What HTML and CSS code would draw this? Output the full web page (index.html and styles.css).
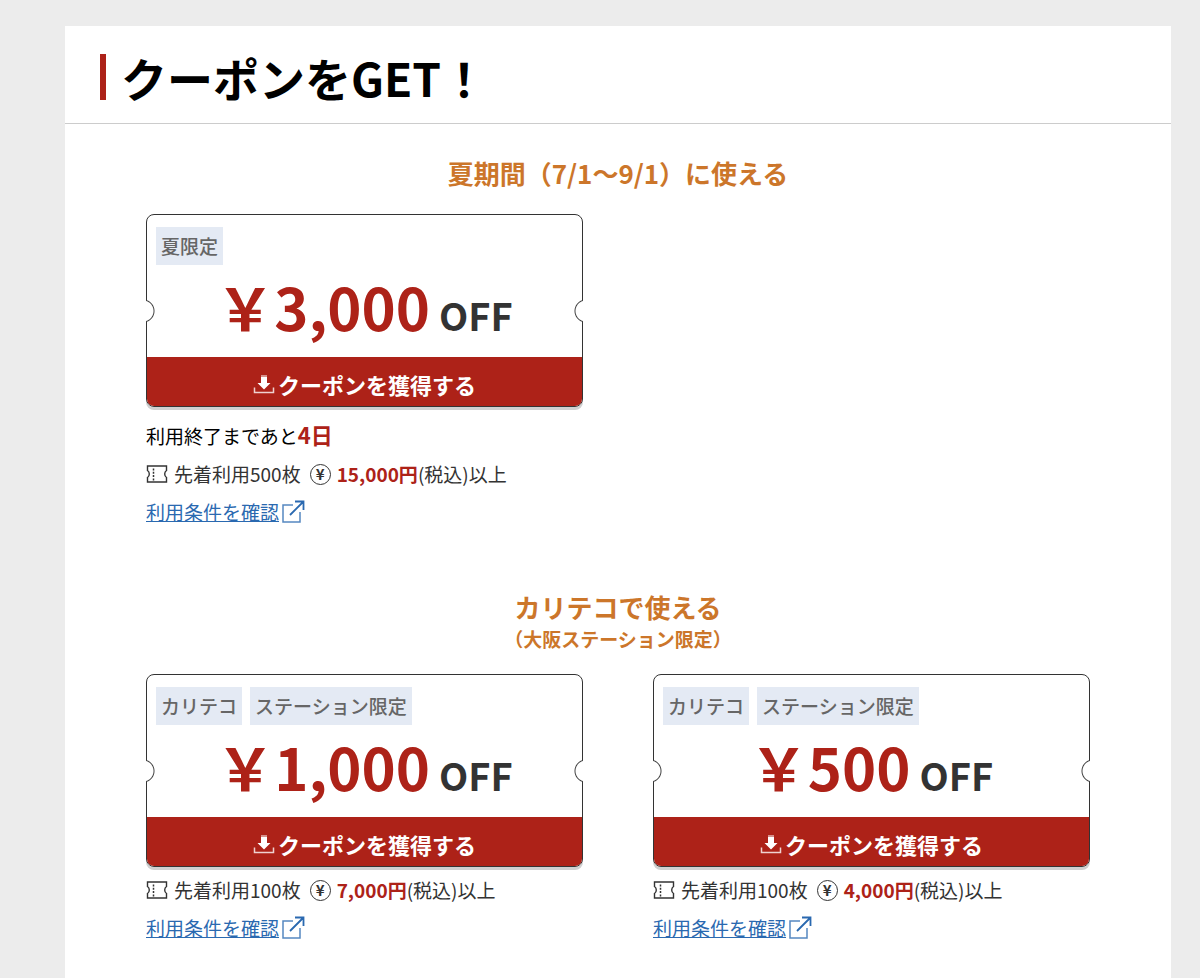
FILE: index.html
```html
<!DOCTYPE html>
<html lang="ja">
<head>
    <meta charset="UTF-8">
    <meta name="viewport" content="width=device-width, initial-scale=1">
    <title>クーポンをGET！</title>
    <link rel="stylesheet" href="styles.css">
</head>
<body>
    <!-- 共通アイコン -->
    <svg class="sprite" aria-hidden="true">
        <symbol id="icon-download" viewBox="0 0 22 20">
            <path d="M8 1h6v2H8z" opacity=".5"/>
            <path d="M8 3h6v6h3.500l-6.500 6.500L4.500 9H8z"/>
            <path d="M1.500 13.500v5h19v-5" fill="none" stroke="currentColor" stroke-width="1.500" opacity=".8"/>
        </symbol>
        <symbol id="icon-ticket" viewBox="0 0 22 18">
            <path d="M1.500 1h19v4.500c-1.300.8-1.800 2-1.800 3.500s.5 2.700 1.800 3.500V17h-19v-4.500C2.800 11.700 3.300 10.500 3.300 9S2.800 6.300 1.500 5.500z" fill="none" stroke="currentColor" stroke-width="1.400"/>
            <path d="M7.500 3.500v12" fill="none" stroke="currentColor" stroke-width="1.500" stroke-dasharray="2 1.300"/>
        </symbol>
        <symbol id="icon-external" viewBox="0 0 24 24">
            <path d="M12 5H2v17h17V12" fill="none" stroke="currentColor" stroke-width="1.500" opacity=".8"/>
            <path d="M9 15L21.500 2.500M14 1.500h8.500V10" fill="none" stroke="currentColor" stroke-width="1.800"/>
        </symbol>
    </svg>

    <main class="panel">
        <header class="panel-header">
            <h1 class="panel-title">クーポンをGET！</h1>
        </header>

        <!-- 夏期間 -->
        <section class="coupon-section">
            <h2 class="section-title">夏期間（7/1〜9/1）に使える</h2>
            <div class="coupon-grid">
                <article class="coupon">
                    <div class="ticket">
                        <div class="tags"><span class="tag">夏限定</span></div>
                        <p class="price">￥3,000<span class="off">OFF</span></p>
                        <button type="button" class="get-button">
                            <svg class="icon-download" aria-hidden="true"><use href="#icon-download"/></svg>クーポンを獲得する
                        </button>
                    </div>
                    <p class="limit">利用終了まであと<strong>4日</strong></p>
                    <p class="terms">
                        <svg class="icon-ticket" aria-hidden="true"><use href="#icon-ticket"/></svg>
                        <span class="count">先着利用500枚</span>
                        <span class="icon-yen">¥</span>
                        <span><strong>15,000円</strong>(税込)以上</span>
                    </p>
                    <a class="detail-link" href="#"><span>利用条件を確認</span><svg class="icon-external" aria-hidden="true"><use href="#icon-external"/></svg></a>
                </article>
            </div>
        </section>

        <!-- カリテコ -->
        <section class="coupon-section">
            <h2 class="section-title">カリテコで使える<small>（大阪ステーション限定）</small></h2>
            <div class="coupon-grid">
                <article class="coupon">
                    <div class="ticket">
                        <div class="tags"><span class="tag">カリテコ</span><span class="tag">ステーション限定</span></div>
                        <p class="price">￥1,000<span class="off">OFF</span></p>
                        <button type="button" class="get-button">
                            <svg class="icon-download" aria-hidden="true"><use href="#icon-download"/></svg>クーポンを獲得する
                        </button>
                    </div>
                    <p class="terms">
                        <svg class="icon-ticket" aria-hidden="true"><use href="#icon-ticket"/></svg>
                        <span class="count">先着利用100枚</span>
                        <span class="icon-yen">¥</span>
                        <span><strong>7,000円</strong>(税込)以上</span>
                    </p>
                    <a class="detail-link" href="#"><span>利用条件を確認</span><svg class="icon-external" aria-hidden="true"><use href="#icon-external"/></svg></a>
                </article>
                <article class="coupon">
                    <div class="ticket">
                        <div class="tags"><span class="tag">カリテコ</span><span class="tag">ステーション限定</span></div>
                        <p class="price">￥500<span class="off">OFF</span></p>
                        <button type="button" class="get-button">
                            <svg class="icon-download" aria-hidden="true"><use href="#icon-download"/></svg>クーポンを獲得する
                        </button>
                    </div>
                    <p class="terms">
                        <svg class="icon-ticket" aria-hidden="true"><use href="#icon-ticket"/></svg>
                        <span class="count">先着利用100枚</span>
                        <span class="icon-yen">¥</span>
                        <span><strong>4,000円</strong>(税込)以上</span>
                    </p>
                    <a class="detail-link" href="#"><span>利用条件を確認</span><svg class="icon-external" aria-hidden="true"><use href="#icon-external"/></svg></a>
                </article>
            </div>
        </section>
    </main>
</body>
</html>
```
FILE: styles.css
```css
* { box-sizing: border-box; }
body {
    margin: 0;
    padding: 26px 29px 0 65px;
    background-color: #ececec;
    color: #333;
    font-family: "Noto Sans CJK JP", sans-serif;
    font-size: 19px;
    line-height: 38px;
}
h1, h2, p { margin: 0; }
strong { color: #ad2218; font-weight: bold; }
.sprite { position: absolute; width: 0; height: 0; }

.panel {
    min-height: calc(100vh - 26px);
    padding-bottom: 30px;
    background-color: #fff;
}
.panel-header {
    padding: 28px 35px 23px;
    border-bottom: 1px solid #ccc;
}
.panel-title {
    padding-left: 15px;
    border-left: 6px solid #ad2218;
    color: #000;
    font-size: 46px;
    line-height: 46px;
}

.coupon-section { padding: 30px 81px 0; }
.coupon-section + .coupon-section { padding-top: 57px; }
.section-title {
    margin-bottom: 22px;
    color: #cc762a;
    font-size: 26px;
    line-height: 38px;
    text-align: center;
}
.section-title small {
    display: block;
    font-size: 19px;
    line-height: 26px;
}
.coupon-grid {
    display: grid;
    grid-template-columns: 1fr 1fr;
    gap: 70px;
}

/* チケット型の枠 */
.ticket {
    position: relative;
    margin-bottom: 4px;
    border: 1px solid #333;
    border-radius: 8px;
    box-shadow: 0 3px 0 #d0d0d0;
}
/* 左右の切り欠き */
.ticket::before,
.ticket::after {
    content: "";
    position: absolute;
    top: 85px;
    width: 9px;
    height: 22px;
}
.ticket::before {
    left: -1px;
    background: radial-gradient(circle at -3px 50%, #fff 10px, #444 11px, transparent 12px);
}
.ticket::after {
    right: -1px;
    background: radial-gradient(circle at 12px 50%, #fff 10px, #444 11px, transparent 12px);
}
.tags {
    display: flex;
    gap: 8px;
    padding: 12px 9px 0;
}
.tag {
    padding: 0 5px;
    background-color: #e4eaf4;
    color: #666;
    font-weight: 500;
}
.price {
    height: 92px;
    color: #ad2218;
    font-size: 58px;
    font-weight: bold;
    line-height: 82px;
    text-align: center;
}
.off { margin-left: 9px; color: #333; font-size: 38px; }
.get-button {
    display: flex;
    align-items: center;
    justify-content: center;
    gap: 3px;
    width: 100%;
    height: 49px;
    padding: 4px 0 0;
    border: 0;
    border-radius: 0 0 7px 7px;
    background-color: #ad2218;
    color: #fff;
    font-family: inherit;
    font-size: 22px;
    font-weight: bold;
    line-height: 38px;
    cursor: pointer;
}
.icon-download { width: 22px; height: 20px; fill: currentColor; }

.limit { padding-top: 4px; color: #000; }
.limit strong { font-size: 22px; }
.terms { display: flex; align-items: center; }
.icon-ticket { width: 22px; height: 18px; }
.count { margin: 0 9px 0 6px; }
.icon-yen {
    width: 21px;
    height: 21px;
    margin-right: 6px;
    border: 1px solid #333;
    border-radius: 50%;
    font-size: 15px;
    font-weight: bold;
    line-height: 18px;
    text-align: center;
}
.detail-link {
    display: flex;
    align-items: center;
    gap: 2px;
    color: #2a69b0;
    text-decoration: none;
}
.detail-link span { text-decoration: underline; }
.icon-external { width: 24px; height: 24px; }
```
